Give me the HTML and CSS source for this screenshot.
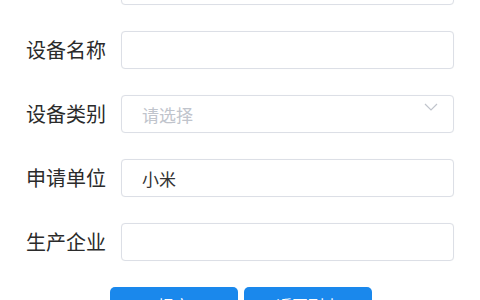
FILE: index.html
```html
<!DOCTYPE html>
<html lang="zh-CN">
<head>
<meta charset="utf-8">
<link rel="stylesheet" href="styles.css">
</head>
<body>
<form class="form">
  <div class="row">
    <label class="label">设备编号</label>
    <div class="field"><input class="input" type="text"></div>
  </div>
  <div class="row">
    <label class="label">设备名称</label>
    <div class="field"><input class="input" type="text"></div>
  </div>
  <div class="row">
    <label class="label">设备类别</label>
    <div class="field select">
      <input class="input" type="text" placeholder="请选择" readonly>
      <svg class="chevron" width="14" height="8" viewBox="0 0 14 8"><path d="M1 1 L7 7 L13 1" fill="none" stroke="#c0c4cc" stroke-width="1.2"/></svg>
    </div>
  </div>
  <div class="row">
    <label class="label">申请单位</label>
    <div class="field"><input class="input" type="text" value="小米"></div>
  </div>
  <div class="row">
    <label class="label">生产企业</label>
    <div class="field"><input class="input" type="text"></div>
  </div>
  <div class="actions">
    <button type="button" class="btn">提交</button>
    <button type="button" class="btn">返回列表</button>
  </div>
</form>
</body>
</html>
```
FILE: styles.css
```css
html, body {
  margin: 0;
  padding: 0;
  background: #ffffff;
  overflow: hidden;
}
body {
  font-family: "Noto Sans CJK SC", "Noto Sans", sans-serif;
  color: #303133;
}
.form {
  margin-top: -33px;
  padding: 0 26px 0 26px;
  display: flex;
  flex-direction: column;
  gap: 26px;
}
.row {
  display: grid;
  grid-template-columns: 81px 1fr;
  column-gap: 14px;
  align-items: center;
  height: 38px;
}
.label {
  font-size: 20px;
  line-height: 38px;
  color: #2b2b2b;
  white-space: nowrap;
}
.field {
  position: relative;
  height: 38px;
}
.input {
  box-sizing: border-box;
  width: 100%;
  height: 38px;
  border: 1px solid #dcdfe6;
  border-radius: 4px;
  padding: 0 20px;
  font-family: inherit;
  font-size: 17px;
  color: #333333;
  background: #ffffff;
  outline: none;
  box-shadow: 0 0 1px rgba(0,0,0,0.05);
}
.input::placeholder {
  color: #c0c4cc;
}
.chevron {
  position: absolute;
  right: 16px;
  top: 8px;
}
.actions {
  display: flex;
  justify-content: center;
  gap: 6px;
  padding-left: 2px;
}
.btn {
  width: 128px;
  height: 36px;
  border: none;
  border-radius: 5px;
  background: #1a88ec;
  color: #ffffff;
  font-family: inherit;
  font-size: 16px;
  line-height: 20px;
  padding: 0;
}
```
